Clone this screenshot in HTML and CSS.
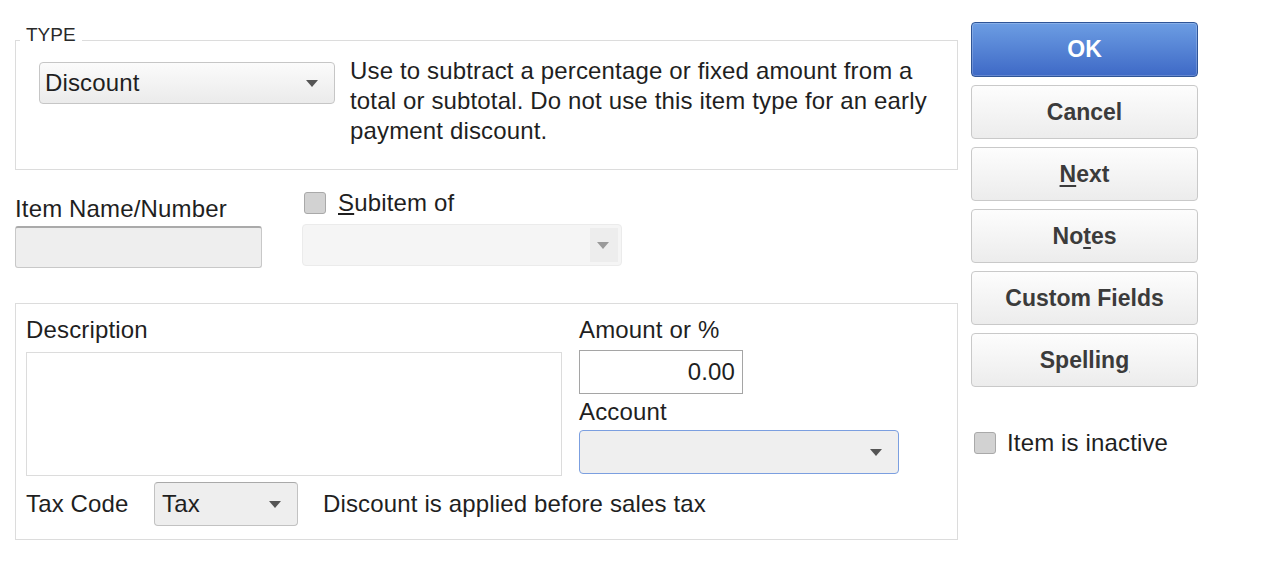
FILE: index.html
```html
<html lang="en">
<head>
    <meta charset="UTF-8">
    <title>New Item</title>
    <link rel="stylesheet" href="styles.css">
</head>
<body>

<div class="dialog">
    <div class="main">

        <fieldset class="type-box">
            <legend>TYPE</legend>
            <div class="type-row">
                <div class="combo type-combo"><span>Discount</span><span class="arrow"></span></div>
                <p class="type-text">Use to subtract a percentage or fixed amount from a total or subtotal. Do not use this item type for an early payment discount.</p>
            </div>
        </fieldset>

        <div class="item-row">
            <div class="field-item">
                <label for="itemname">Item Name/Number</label>
                <input type="text" id="itemname" class="text-input item-input">
            </div>
            <div class="field-sub">
                <div class="check-line"><span class="check"></span><span><u>S</u>ubitem of</span></div>
                <div class="combo combo-disabled sub-combo"><span class="arrow-box"><span class="arrow"></span></span></div>
            </div>
        </div>

        <div class="detail-box">
            <div class="detail-top">
                <div class="desc-col">
                    <label for="description">Description</label>
                    <textarea id="description" class="desc-area"></textarea>
                </div>
                <div class="amount-col">
                    <label for="amount">Amount or %</label>
                    <input type="text" id="amount" class="text-input amount-input" value="0.00">
                    <label class="account-label">Account</label>
                    <div class="combo combo-focus account-combo"><span class="arrow"></span></div>
                </div>
            </div>
            <div class="tax-row">
                <span class="tax-label">Tax Code</span>
                <div class="combo combo-flat tax-combo"><span>Tax</span><span class="arrow"></span></div>
                <span class="tax-note">Discount is applied before sales tax</span>
            </div>
        </div>

    </div>

    <div class="actions">
        <button class="btn btn-ok">OK</button>
        <button class="btn">Cancel</button>
        <button class="btn"><u>N</u>ext</button>
        <button class="btn">No<u>t</u>es</button>
        <button class="btn">Custom Fields</button>
        <button class="btn">Spellin<u>g</u></button>
        <div class="check-line inactive"><span class="check"></span><span>Item is inactive</span></div>
    </div>
</div>

</body>
</html>
```

FILE: styles.css
```css
body {
    margin: 0;
    font-family: "Liberation Sans", Arial, sans-serif;
    font-size: 24px;
    letter-spacing: 0.15px;
    color: #1f1f1f;
    background-color: #FFFFFF;
}

.dialog {
    display: flex;
    gap: 13px;
    padding: 22px 0 0 15px;
}

.main {
    width: 943px;
    display: flex;
    flex-direction: column;
}

label {
    display: block;
    line-height: 30px;
}

/* type group */

.type-box {
    margin: 3px 0 0;
    padding: 0 0 23px 4px;
    border: 1px solid #dcdcdc;
    min-width: 0;
}

.type-box legend {
    font-size: 19px;
    line-height: 19px;
    letter-spacing: 0;
    padding: 0 6px 12px;
    color: #2a2a2a;
}

.type-row {
    display: flex;
    gap: 15px;
    padding-left: 19px;
}

.type-text {
    width: 592px;
    margin: 0;
    line-height: 30px;
}

/* combos */

.combo {
    box-sizing: border-box;
    height: 42px;
    display: flex;
    align-items: center;
    padding-left: 5px;
    border: 1px solid #c6c6c6;
    border-radius: 4px;
    background: linear-gradient(#fbfbfb, #ebebeb);
}

.arrow {
    width: 0;
    height: 0;
    margin-left: auto;
    margin-right: 16px;
    border-left: 6px solid transparent;
    border-right: 6px solid transparent;
    border-top: 7px solid #555555;
}

.type-combo {
    width: 296px;
    margin-top: 6px;
}

.combo-disabled {
    background: #f5f5f5;
    border-color: #ebebeb;
}

.arrow-box {
    display: flex;
    align-items: center;
    margin-left: auto;
    width: 28px;
    height: 34px;
    margin-right: 3px;
    background-color: #ededed;
}

.arrow-box .arrow {
    margin-right: 9px;
    border-top-color: #9a9a9a;
}

.combo-focus {
    height: 44px;
    background: #efefef;
    border-color: #7b9fe0;
}

.combo-flat {
    height: 44px;
    padding-left: 7px;
    background: #eeeeee;
    border-color: #c2c2c2;
    border-top-color: #a9a9a9;
}

/* item row */

.item-row {
    display: flex;
    gap: 40px;
    margin-top: 18px;
}

.field-item label {
    padding-top: 6px;
}

.text-input {
    box-sizing: border-box;
    display: block;
    font-family: inherit;
    font-size: 24px;
    letter-spacing: 0.15px;
    color: #1f1f1f;
    outline: none;
}

.item-input {
    width: 247px;
    height: 42px;
    margin-top: 2px;
    background-color: #eeeeee;
    border: 1px solid #c8c8c8;
    border-top: 2px solid #aaaaaa;
    border-radius: 3px;
}

.check-line {
    display: flex;
    align-items: center;
    gap: 12px;
    height: 30px;
}

.check {
    box-sizing: border-box;
    width: 22px;
    height: 22px;
    margin-left: 2px;
    border: 1px solid #a9a9a9;
    border-radius: 3px;
    background-color: #d2d2d2;
}

.sub-combo {
    width: 320px;
    margin-top: 6px;
}

/* detail group */

.detail-box {
    margin-top: 35px;
    padding: 11px 0 13px 10px;
    border: 1px solid #dcdcdc;
}

.detail-top {
    display: flex;
    gap: 17px;
}

.desc-col {
    width: 536px;
}

.desc-area {
    box-sizing: border-box;
    display: block;
    width: 536px;
    height: 124px;
    margin: 7px 0 0;
    border: 1px solid #dcdcdc;
    resize: none;
    outline: none;
}

.amount-input {
    width: 164px;
    height: 44px;
    margin-top: 5px;
    padding: 0 7px 0 0;
    text-align: right;
    border: 1px solid #a5a5a5;
    border-radius: 0;
}

.account-label {
    margin-top: 3px;
}

.account-combo {
    width: 320px;
    margin-top: 3px;
}

.tax-row {
    display: flex;
    align-items: center;
    margin-top: 6px;
}

.tax-label {
    width: 128px;
}

.tax-combo {
    width: 144px;
}

.tax-note {
    margin-left: 25px;
}

/* buttons */

.actions {
    width: 227px;
    display: flex;
    flex-direction: column;
    gap: 8px;
}

.btn {
    height: 54px;
    font-family: inherit;
    font-size: 23px;
    font-weight: bold;
    letter-spacing: 0;
    color: #3b3b3b;
    border: 1px solid #c9c9c9;
    border-radius: 4px;
    background: linear-gradient(#fdfdfd, #ececec);
    padding: 0;
}

.btn-ok {
    height: 55px;
    color: #FFFFFF;
    border-color: #2f5597;
    background: linear-gradient(#6c9de3, #3e69c6);
    box-shadow: inset 0 0 0 1px rgba(255, 255, 255, 0.2);
}

.btn u {
    text-underline-offset: 3px;
}

.inactive {
    margin-top: 33px;
    gap: 11px;
}

.inactive .check {
    margin-left: 3px;
}
```
